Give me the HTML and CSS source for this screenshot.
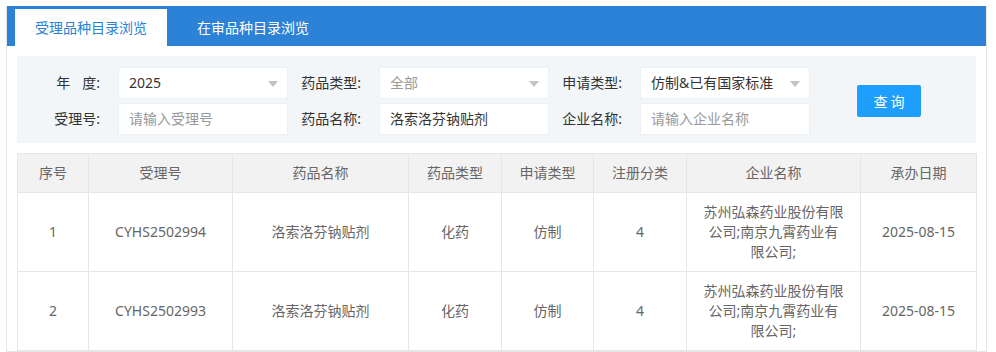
FILE: index.html
```html
<!DOCTYPE html>
<html lang="zh-CN">

<head>
    <meta charset="utf-8">
    <title>受理品种目录浏览</title>
    <link rel="stylesheet" href="styles.css">
</head>

<body>
    <div class="page">
        <div class="tabs">
            <span class="tab active">受理品种目录浏览</span>
            <span class="tab">在审品种目录浏览</span>
        </div>
        <div class="content">
            <form class="filter">
                <div class="fields">
                    <label><span class="wide">年</span>度:</label>
                    <div class="input select">2025</div>
                    <label>药品类型:</label>
                    <div class="input select ph">全部</div>
                    <label>申请类型:</label>
                    <div class="input select">仿制&amp;已有国家标准</div>

                    <label>受理号:</label>
                    <div class="input ph">请输入受理号</div>
                    <label>药品名称:</label>
                    <div class="input">洛索洛芬钠贴剂</div>
                    <label>企业名称:</label>
                    <div class="input ph">请输入企业名称</div>
                </div>
                <button type="button" class="btn">查询</button>
            </form>

            <table class="list">
                <colgroup>
                    <col width="71">
                    <col width="144">
                    <col width="176">
                    <col width="93">
                    <col width="92">
                    <col width="93">
                    <col width="174">
                    <col width="116">
                </colgroup>
                <tr>
                    <th>序号</th>
                    <th>受理号</th>
                    <th>药品名称</th>
                    <th>药品类型</th>
                    <th>申请类型</th>
                    <th>注册分类</th>
                    <th>企业名称</th>
                    <th>承办日期</th>
                </tr>
                <tr>
                    <td>1</td>
                    <td>CYHS2502994</td>
                    <td>洛索洛芬钠贴剂</td>
                    <td>化药</td>
                    <td>仿制</td>
                    <td>4</td>
                    <td>苏州弘森药业股份有限公司;南京九霄药业有限公司;</td>
                    <td>2025-08-15</td>
                </tr>
                <tr>
                    <td>2</td>
                    <td>CYHS2502993</td>
                    <td>洛索洛芬钠贴剂</td>
                    <td>化药</td>
                    <td>仿制</td>
                    <td>4</td>
                    <td>苏州弘森药业股份有限公司;南京九霄药业有限公司;</td>
                    <td>2025-08-15</td>
                </tr>
            </table>
        </div>
    </div>
</body>

</html>
```

FILE: styles.css
```css
* {
    padding: 0;
    margin: 0;
    box-sizing: border-box;
}

html,
body {
    font-family: "Microsoft YaHei", "Noto Sans", "Noto Sans CJK SC", sans-serif;
    font-size: 14px;
    color: #333;
    background: #fff;
}

body {
    padding: 6px 0 0 6px;
}

.page {
    width: 981px;
    border: 1px solid #e6e6e6;
    border-top: 0;
}

/* 顶部选项卡 */
.tabs {
    display: flex;
    align-items: flex-end;
    gap: 10px;
    height: 40px;
    padding-left: 8px;
    background: #2b82d6;
}

.tab {
    height: 37px;
    line-height: 37px;
    padding: 0 20px;
    color: #fff;
    cursor: pointer;
}

.tab.active {
    background: #fff;
    color: #2b82d6;
}

.content {
    padding: 10px 10px 0;
}

/* 查询条件 */
.filter {
    display: flex;
    align-items: center;
    padding: 11px 0 8px 10px;
    background: #f2f6f8;
}

.fields {
    display: grid;
    grid-template-columns: 91px 170px 91px 170px 91px 170px;
    row-gap: 4px;
}

.fields label {
    text-align: right;
    padding-right: 18px;
    line-height: 32px;
    white-space: nowrap;
}

.fields .wide {
    margin-right: 12px;
}

.input {
    position: relative;
    height: 32px;
    line-height: 30px;
    padding-left: 10px;
    background: #fff;
    border: 1px solid #edf0f2;
    color: #333;
    white-space: nowrap;
}

.input.ph {
    color: #999;
}

.select::after {
    content: "";
    position: absolute;
    right: 9px;
    top: 50%;
    margin-top: -2px;
    border-style: solid;
    border-width: 6px 5px 0;
    border-color: #c2c2c2 transparent transparent;
}

.btn {
    margin-left: 47px;
    width: 64px;
    height: 32px;
    background: #1e9fff;
    color: #fff;
    border: 0;
    border-radius: 2px;
    font-family: inherit;
    font-size: 14px;
    letter-spacing: 3px;
    text-indent: 3px;
    cursor: pointer;
}

/* 列表 */
.list {
    width: 100%;
    margin-top: 10px;
    border-collapse: collapse;
    table-layout: fixed;
}

.list th,
.list td {
    padding: 9px 15px;
    line-height: 20px;
    border: 1px solid #e6e6e6;
    text-align: center;
    color: #666;
    font-weight: normal;
}

.list th {
    background: #f2f2f2;
}
```
